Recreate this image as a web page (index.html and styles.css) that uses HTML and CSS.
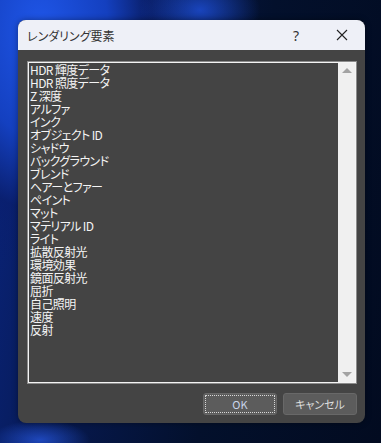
FILE: index.html
```html
<!DOCTYPE html>
<html lang="ja">
<head>
    <meta charset="UTF-8">
    <title>レンダリング要素</title>
    <link rel="stylesheet" href="styles.css">
</head>
<body>
    <div class="dialog">
        <div class="titlebar">
            <span class="title">レンダリング要素</span>
            <span class="help">?</span>
            <span class="close">
                <svg width="12" height="12" viewBox="0 0 12 12"><path d="M1 1L11 11M11 1L1 11" stroke="#222" stroke-width="1.1" fill="none"/></svg>
            </span>
        </div>
        <div class="content">
            <div class="listbox">
                <ul class="items">
                    <li>HDR 輝度データ</li>
                    <li>HDR 照度データ</li>
                    <li>Z 深度</li>
                    <li>アルファ</li>
                    <li>インク</li>
                    <li>オブジェクト ID</li>
                    <li>シャドウ</li>
                    <li>バックグラウンド</li>
                    <li>ブレンド</li>
                    <li>ヘアーとファー</li>
                    <li>ペイント</li>
                    <li>マット</li>
                    <li>マテリアル ID</li>
                    <li>ライト</li>
                    <li>拡散反射光</li>
                    <li>環境効果</li>
                    <li>鏡面反射光</li>
                    <li>屈折</li>
                    <li>自己照明</li>
                    <li>速度</li>
                    <li>反射</li>
                </ul>
                <div class="scrollbar">
                    <span class="arrow up"></span>
                    <span class="arrow down"></span>
                </div>
            </div>
            <div class="buttons">
                <button class="btn ok">OK</button>
                <button class="btn">キャンセル</button>
            </div>
        </div>
    </div>
</body>
</html>
```

FILE: styles.css
```css
html, body {
    margin: 0;
    padding: 0;
    height: 100%;
}
body {
    font-family: "Noto Sans CJK JP", "Noto Sans", sans-serif;
    font-feature-settings: "palt";
    background-color: #03102c;
    background-image:
        radial-gradient(ellipse 50px 20px at 40px 440px, rgba(40, 90, 230, 0.7), transparent),
        radial-gradient(ellipse 60px 40px at 200px 10px, rgba(30, 80, 220, 0.8), transparent),
        radial-gradient(ellipse 150px 240px at 40px 30px, #1f56e8 0%, #1440c0 45%, rgba(10, 30, 110, 0.6) 75%, transparent 100%),
        linear-gradient(100deg, #0a2580 0%, #061748 35%, #03102c 60%, #020b20 100%);
    overflow: hidden;
}
.dialog {
    position: relative;
    top: 20px;
    left: 18px;
    width: 347px;
    height: 403px;
    background: #444444;
    border-radius: 8px;
    overflow: hidden;
    box-shadow: 0 0 6px rgba(0, 0, 0, 0.4);
}
.titlebar {
    height: 30px;
    background: #eef0f7;
    display: flex;
    align-items: center;
    padding-left: 9px;
    color: #333333;
    font-size: 12px;
}
.title {
    flex: 1;
}
.help {
    width: 46px;
    text-align: center;
    font-family: "Noto Sans", sans-serif;
    font-size: 14px;
}
.close {
    width: 46px;
    display: flex;
    justify-content: center;
}
.content {
    padding: 11px 8px 0 9px;
}
.listbox {
    display: flex;
    height: 321px;
    border: 1px solid #8c8c8c;
    outline: 1px solid #f4f4f4;
    outline-offset: -2px;
    background: #444444;
}
.items {
    flex: 1;
    list-style: none;
    margin: 0;
    padding: 1px 0 0 2px;
    color: #f4f4f4;
    font-size: 12px;
    line-height: 13px;
    letter-spacing: -0.6px;
}
.items li {
    height: 13px;
    white-space: nowrap;
}
.scrollbar {
    width: 17px;
    margin: 1px 1px 1px 0;
    background: #f0f0f0;
    display: flex;
    flex-direction: column;
    justify-content: space-between;
    align-items: center;
    padding: 5px 0;
    box-sizing: border-box;
}
.arrow {
    width: 0;
    height: 0;
    border-left: 5px solid transparent;
    border-right: 5px solid transparent;
}
.arrow.up {
    border-bottom: 5px solid #a3a3a3;
}
.arrow.down {
    border-top: 5px solid #a3a3a3;
}
.buttons {
    display: flex;
    justify-content: flex-end;
    gap: 6px;
    margin-top: 9px;
}
.btn {
    width: 74px;
    height: 22px;
    background: #5c5c5c;
    border: 1px solid #686868;
    border-radius: 3px;
    color: #dcdcdc;
    font-family: "Noto Sans CJK JP", sans-serif;
    font-feature-settings: "palt";
    font-size: 11px;
    padding: 0;
}
.ok {
    color: #c8d4ea;
    outline: 1px dotted #d8d8d8;
    outline-offset: -3px;
}
```
